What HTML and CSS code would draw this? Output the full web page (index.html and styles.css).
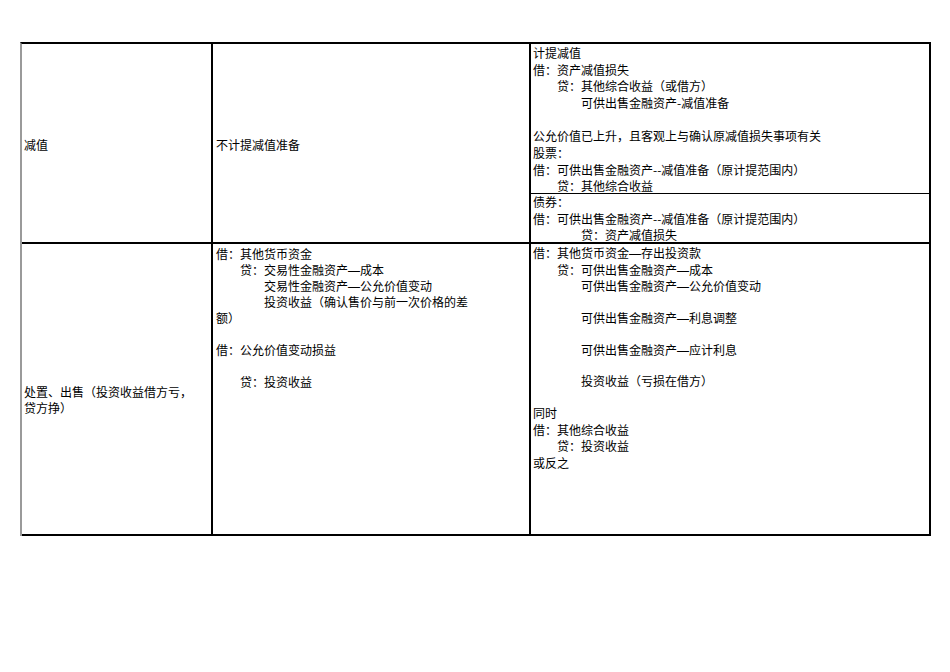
FILE: index.html
```html
<!DOCTYPE html>
<html lang="zh-CN">
<head>
<meta charset="utf-8">
<title>可供出售金融资产</title>
<link rel="stylesheet" href="styles.css">
</head>
<body>
<div class="sheet">
  <div class="cell label r1">减值</div>
  <div class="cell label r1">不计提减值准备</div>
  <div class="cell split">
    <div class="part upper">
      <div class="ln">计提减值</div>
      <div class="ln">借：资产减值损失</div>
      <div class="ln i1">贷：其他综合收益（或借方）</div>
      <div class="ln i2">可供出售金融资产-减值准备</div>
      <div class="ln blank"></div>
      <div class="ln">公允价值已上升，且客观上与确认原减值损失事项有关</div>
      <div class="ln">股票：</div>
      <div class="ln">借：可供出售金融资产--减值准备（原计提范围内）</div>
      <div class="ln i1">贷：其他综合收益</div>
    </div>
    <div class="part lower">
      <div class="ln">债券：</div>
      <div class="ln">借：可供出售金融资产--减值准备（原计提范围内）</div>
      <div class="ln i2">贷：资产减值损失</div>
    </div>
  </div>

  <div class="cell label r2">处置、出售（投资收益借方亏，<br>贷方挣）</div>
  <div class="cell lines c2">
    <div class="ln">借：其他货币资金</div>
    <div class="ln i1">贷：交易性金融资产<span class="dash">—</span>成本</div>
    <div class="ln i2">交易性金融资产<span class="dash">—</span>公允价值变动</div>
    <div class="ln i2">投资收益（确认售价与前一次价格的差</div>
    <div class="ln">额）</div>
    <div class="ln blank"></div>
    <div class="ln">借：公允价值变动损益</div>
    <div class="ln blank"></div>
    <div class="ln i1">贷：投资收益</div>
  </div>
  <div class="cell lines c3">
    <div class="ln">借：其他货币资金<span class="dash">—</span>存出投资款</div>
    <div class="ln i1">贷：可供出售金融资产<span class="dash">—</span>成本</div>
    <div class="ln i2">可供出售金融资产<span class="dash">—</span>公允价值变动</div>
    <div class="ln gap"></div>
    <div class="ln i2">可供出售金融资产<span class="dash">—</span>利息调整</div>
    <div class="ln gap"></div>
    <div class="ln i2">可供出售金融资产<span class="dash">—</span>应计利息</div>
    <div class="ln gap"></div>
    <div class="ln i2">投资收益（亏损在借方）</div>
    <div class="ln gap"></div>
    <div class="ln">同时</div>
    <div class="ln">借：其他综合收益</div>
    <div class="ln i1">贷：投资收益</div>
    <div class="ln">或反之</div>
  </div>
</div>
</body>
</html>
```

FILE: styles.css
```css
html, body {
  margin: 0;
  padding: 0;
  background: #ffffff;
}

body {
  font-family: "Noto Sans CJK SC", "Noto Sans", sans-serif;
  font-size: 12px;
  color: #000000;
}

.sheet {
  margin: 42px 0 0 20px;
  display: grid;
  grid-template-columns: 191px 318px 400px;
  grid-template-rows: 200px 292px;
  width: max-content;
  border-top: 2px solid #000000;
  border-left: 2px solid #9a9a9a;
}

.cell {
  box-sizing: border-box;
  border-right: 2px solid #000000;
  border-bottom: 2px solid #000000;
}

.label {
  display: flex;
  align-items: center;
  padding-left: 2px;
  line-height: 16px;
  white-space: nowrap;
}

.label.r1 {
  padding-top: 4px;
}

.label.r2 {
  padding-top: 21px;
}

.cell:nth-child(2) {
  padding-left: 3px;
}

.split {
  display: flex;
  flex-direction: column;
}

.part {
  padding-left: 2px;
  line-height: 16.67px;
  white-space: nowrap;
}

.part .ln {
  height: 16.67px;
}

.upper {
  height: 150px;
  box-sizing: border-box;
  padding-top: 1px;
  border-bottom: 1px solid #000000;
}

.lower {
  flex: 1;
}

.lines {
  white-space: nowrap;
}

.c2 {
  padding: 2px 0 0 3px;
  line-height: 16px;
}

.c2 .ln {
  height: 16px;
}

.c3 {
  padding: 1px 0 0 2px;
  line-height: 16.67px;
}

.c3 .ln {
  height: 16.67px;
}

.c3 .ln.gap {
  height: 15px;
}

.i1 {
  padding-left: 24px;
}

.i2 {
  padding-left: 48px;
}

.dash {
  font-family: "Liberation Sans", sans-serif;
  line-height: 1;
}
```
